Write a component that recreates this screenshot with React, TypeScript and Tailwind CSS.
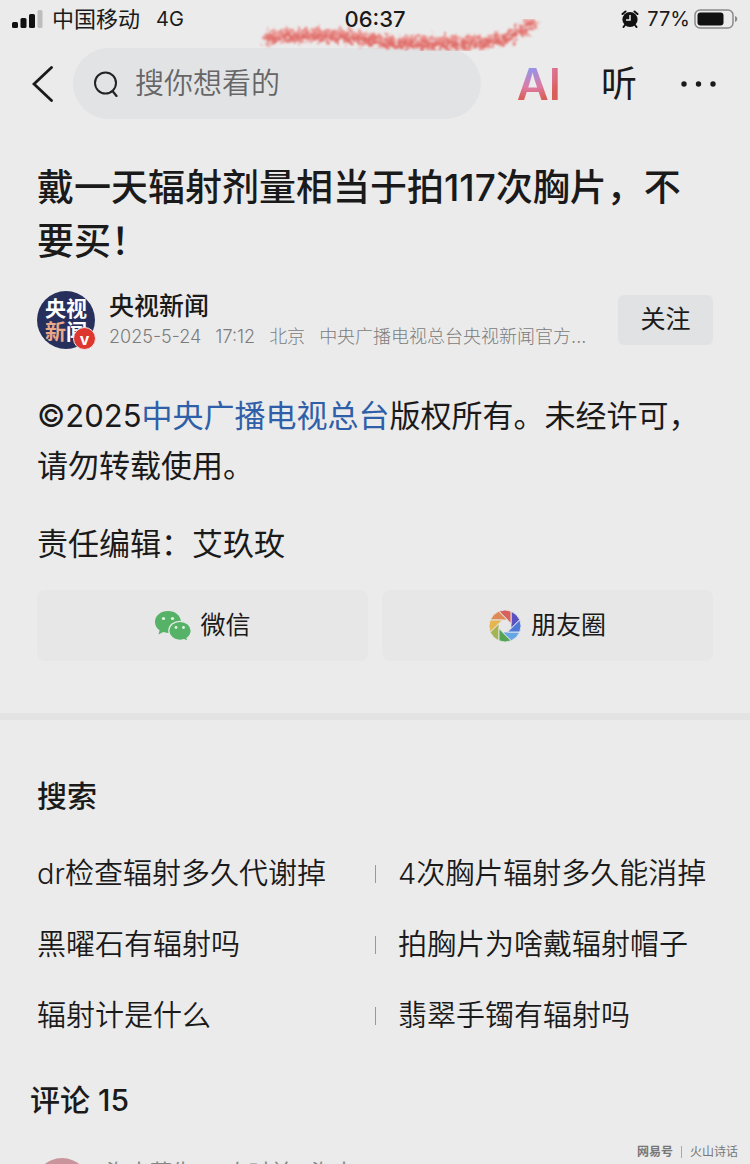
import React from "react";

const bladeColors = [
  "#5a50c2",
  "#d5625f",
  "#dd8a56",
  "#e5b552",
  "#a3b455",
  "#55a455",
  "#66a6e4",
  "#4f78d6",
];

const searches = [
  "dr检查辐射多久代谢掉",
  "4次胸片辐射多久能消掉",
  "黑曜石有辐射吗",
  "拍胸片为啥戴辐射帽子",
  "辐射计是什么",
  "翡翠手镯有辐射吗",
];

// One blade of the aperture: two tangent lines of the hole joined by an arc
function bladePath(k: number) {
  const inner = 6;
  const outer = 16;
  const reach = Math.sqrt(outer * outer - inner * inner);
  const point = (index: number, along: number) => {
    const a = (-index * Math.PI) / 4;
    const x = 16 + inner * Math.cos(a) + along * Math.sin(a);
    const y = 16 + inner * Math.sin(a) - along * Math.cos(a);
    return `${x.toFixed(2)} ${y.toFixed(2)}`;
  };
  return `M${point(k, -2.49)}L${point(k, reach)}A16 16 0 0 1 ${point(k - 1, reach)}Z`;
}

function MomentsIcon() {
  return (
    <svg viewBox="0 0 32 32" className="h-8 w-8" aria-hidden="true">
      {bladeColors.map((color, k) => (
        <path key={color} d={bladePath(k)} fill={color} stroke="#e8e8e8" strokeWidth="0.9" />
      ))}
    </svg>
  );
}

function WechatIcon() {
  return (
    <svg viewBox="0 0 38 32" className="h-8 w-[38px]" aria-hidden="true">
      <path
        d="M14 1C6.500 1 1 5.700 1 12c0 3.600 1.800 6.400 4.600 8.300L4.500 24.500l4.700-2.400c1.500.5 3.100.8 4.800.8 7.300 0 13-4.700 13-10.900S21.300 1 14 1Z"
        fill="#55b266"
      />
      <path
        d="M26 11.300c-6.300 0-11.200 4.200-11.200 9.500s4.900 9.500 11.200 9.500c1.500 0 2.900-.2 4.100-.7l3.900 2-1-3.400c2.600-1.800 4.200-4.400 4.200-7.400 0-5.300-4.900-9.500-11.200-9.500Z"
        fill="#55b266"
        stroke="#e8e8e8"
        strokeWidth="1.2"
      />
      <g fill="#e4f3e6">
        <circle cx="9.500" cy="8.500" r="1.600" />
        <circle cx="18.500" cy="8.500" r="1.600" />
        <circle cx="22" cy="17.500" r="1.400" />
        <circle cx="29.500" cy="17.500" r="1.400" />
      </g>
    </svg>
  );
}

function AlarmIcon() {
  return (
    <svg viewBox="0 0 18 18" className="h-[18px] w-[18px]" aria-hidden="true">
      <circle cx="9" cy="9.500" r="7.600" fill="#111" />
      <g fill="none" stroke="#111" strokeWidth="2" strokeLinecap="round">
        <path d="M1.500 4 4.500 1.500M16.500 4l-3-2.500M4 15l-1.500 2M14 15l1.500 2" />
      </g>
      <path d="M9 5v5H5" fill="none" stroke="#ebebeb" strokeWidth="1.500" />
    </svg>
  );
}

function Scribble() {
  return (
    <svg
      viewBox="0 0 290 44"
      className="pointer-events-none absolute top-3 left-1/2 w-[290px] -translate-x-[117px]"
      aria-hidden="true"
    >
      <defs>
        <filter id="crayon" x="-5%" y="-30%" width="110%" height="160%">
          <feTurbulence type="fractalNoise" baseFrequency="0.22" numOctaves="3" seed="4" result="noise" />
          <feDisplacementMap in="SourceGraphic" in2="noise" scale="15" xChannelSelector="R" yChannelSelector="G" result="rough" />
          <feColorMatrix in="noise" values="0 0 0 0 0  0 0 0 0 0  0 0 0 0 0  0 0 -3 0 2.6" result="grain" />
          <feComposite in="rough" in2="grain" operator="in" />
          <feGaussianBlur stdDeviation="0.8" />
        </filter>
      </defs>
      <g fill="none" strokeLinecap="round" strokeLinejoin="round" filter="url(#crayon)">
        <path
          d="M11 26C30 22 55 23 80 24c20 1 38 4 56 7 20 0 40-1 60 0 26 1 45-1 60-9 8-4 13-5 17-9"
          stroke="#ea918d"
          strokeWidth="13"
        />
        <path
          d="M11 27C30 23 55 24 80 25c20 1 38 5 56 8 20 0 40-1 60-1 26 1 45-1 60-9 8-4 13-5 17-9"
          stroke="#e0706c"
          strokeWidth="6"
        />
      </g>
    </svg>
  );
}

function StatusBar() {
  return (
    <div className="grid h-[38px] grid-cols-[1fr_auto_1fr] items-center px-3">
      <div className="flex items-center">
        <svg viewBox="0 0 32 18" className="h-[18px] w-8" aria-hidden="true">
          <rect x="0" y="12" width="6" height="6" rx="1.500" fill="#111" />
          <rect x="8.500" y="8" width="6" height="10" rx="1.500" fill="#111" />
          <rect x="17" y="4" width="6" height="14" rx="1.500" fill="#111" />
          <rect x="25.500" y="0" width="5" height="18" rx="1.500" fill="#bdbdbd" />
        </svg>
        <span className="ml-2 text-[22px]">中国移动</span>
        <span className="ml-4 text-xl">4G</span>
      </div>
      <span className="text-[22px] font-medium">06:37</span>
      <div className="flex items-center justify-end">
        <AlarmIcon />
        <span className="ml-2 text-xl">77%</span>
        <svg viewBox="0 0 44 20" className="ml-1 h-5 w-11" aria-hidden="true">
          <rect x="1" y="1" width="38" height="18" rx="5" fill="none" stroke="#8a8a8a" strokeWidth="1.500" />
          <rect x="3.500" y="3.500" width="26" height="13" rx="3" fill="#111" />
          <path d="M41 7c3 1 3 5 0 6Z" fill="#8a8a8a" />
        </svg>
      </div>
    </div>
  );
}

function NavBar() {
  return (
    <header className="mt-[10px] flex items-center px-8">
      <button aria-label="返回" className="w-[41px]">
        <svg viewBox="0 0 22 36" className="h-9 w-[22px]" fill="none" aria-hidden="true">
          <path d="M19.500 1.500 2 18l17.500 16.500" stroke="#1a1a1a" strokeWidth="2.800" strokeLinecap="round" />
        </svg>
      </button>
      <label className="flex h-[71px] min-w-0 flex-1 items-center rounded-full bg-[#e2e3e5] pl-5">
        <svg viewBox="0 0 26 26" className="h-[26px] w-[26px] shrink-0" fill="none" aria-hidden="true">
          <circle cx="12.500" cy="12" r="10.500" stroke="#222" strokeWidth="2" />
          <path d="m19.500 20 4 5" stroke="#222" strokeWidth="2.200" strokeLinecap="round" />
        </svg>
        <input
          type="search"
          aria-label="搜索"
          placeholder="搜你想看的"
          className="ml-4 w-full min-w-0 bg-transparent text-[29px] font-[350] outline-none placeholder:text-[#666]"
        />
      </label>
      <button className="ml-9 bg-[radial-gradient(circle_at_32%_20%,#8f96ee,#dd7aa5_38%,#d9605a_62%)] bg-clip-text text-[44px] leading-[52px] font-semibold text-transparent">
        AI
      </button>
      <button className="ml-10 text-4xl">听</button>
      <button aria-label="更多" className="ml-[43px]">
        <svg viewBox="0 0 38 8" className="h-2 w-[38px]" fill="#1a1a1a" aria-hidden="true">
          <circle cx="4" cy="4" r="2.700" />
          <circle cx="18.500" cy="4" r="2.700" />
          <circle cx="33" cy="4" r="2.700" />
        </svg>
      </button>
    </header>
  );
}

function Author() {
  return (
    <div className="mt-5 flex items-center">
      <div className="relative h-[58px] w-[58px] shrink-0">
        <div className="flex h-full flex-col items-center justify-center overflow-hidden rounded-full bg-[#27305c] text-[21px] leading-[23px] font-bold text-white">
          <span>央视</span>
          <span>
            <span className="text-[#eba98a]">新</span>闻
          </span>
        </div>
        <span className="absolute -right-px -bottom-px flex h-[23px] w-[23px] items-center justify-center rounded-full border border-[#ebebeb] bg-[#dd3730] text-base leading-4 font-bold text-white">
          v
        </span>
      </div>
      <div className="ml-[14px] min-w-0 flex-1">
        <p className="text-[25px] leading-[34px] font-medium">央视新闻</p>
        <p className="flex gap-[14px] text-lg leading-7 font-light whitespace-nowrap text-[#7c7c7c]">
          <span>2025-5-24</span>
          <span>17:12</span>
          <span>北京</span>
          <span>中央广播电视总台央视新闻官方...</span>
        </p>
      </div>
      <button className="ml-5 h-[50px] w-[95px] shrink-0 rounded-md bg-[#e1e2e4] text-[25px]">
        关注
      </button>
    </div>
  );
}

export default function App() {
  return (
    <div
      lang="zh-CN"
      className="relative h-screen overflow-hidden bg-[#ebebeb] font-[Inter,'Noto_Sans_CJK_SC',sans-serif] text-[#1a1a1a]"
    >
      <StatusBar />
      <Scribble />
      <NavBar />

      <article className="px-[37px] pt-[42px]">
        <h1 className="text-[37px] leading-[54px] font-medium">
          戴一天辐射剂量相当于拍117次胸片，不要买！
        </h1>
        <Author />
        <div className="mt-10 space-y-7 text-[31px] leading-[50px]">
          <p>
            ©2025
            <a href="#cctv" className="text-[#2f5fa8]">
              中央广播电视总台
            </a>
            版权所有。未经许可，请勿转载使用。
          </p>
          <p>责任编辑：艾玖玫</p>
        </div>
        <div className="mt-[21px] grid grid-cols-2 gap-[14px] text-[25px]">
          <button className="flex h-[71px] items-center justify-center gap-2 rounded-lg bg-[#e7e7e7]">
            <WechatIcon />
            微信
          </button>
          <button className="flex h-[71px] items-center justify-center gap-[10px] rounded-lg bg-[#e7e7e7]">
            <MomentsIcon />
            朋友圈
          </button>
        </div>
      </article>

      <hr className="mt-[52px] h-[7px] border-0 bg-[#e3e3e3]" />

      <section className="px-[37px] pt-[54px]">
        <h2 className="text-3xl leading-[44px] font-medium">搜索</h2>
        <ul className="mt-5 grid grid-cols-2 text-[29px] leading-[71px] font-[350] whitespace-nowrap">
          {searches.map((text) => (
            <li key={text} className="group flex items-center">
              <span className="mr-[22px] hidden h-[18px] w-px bg-[#999] group-even:block" />
              <a href="#search">{text}</a>
            </li>
          ))}
        </ul>
      </section>

      <section className="px-[30px] pt-[27px]">
        <h2 className="text-3xl leading-[44px] font-medium">评论 15</h2>
        <div className="mt-9 ml-1 flex">
          <div className="h-14 w-14 rounded-full bg-[#c9949c]" />
          <p className="ml-4 text-[22px] leading-7 text-[#888]">海南蓝生 · 9小时前 · 海南</p>
        </div>
      </section>

      <p className="absolute right-3 bottom-1 flex items-center gap-2 text-xs text-[#777]">
        <span className="font-bold">网易号</span>
        <span className="h-3 w-px bg-[#aaa]" />
        <span>火山诗话</span>
      </p>
    </div>
  );
}
